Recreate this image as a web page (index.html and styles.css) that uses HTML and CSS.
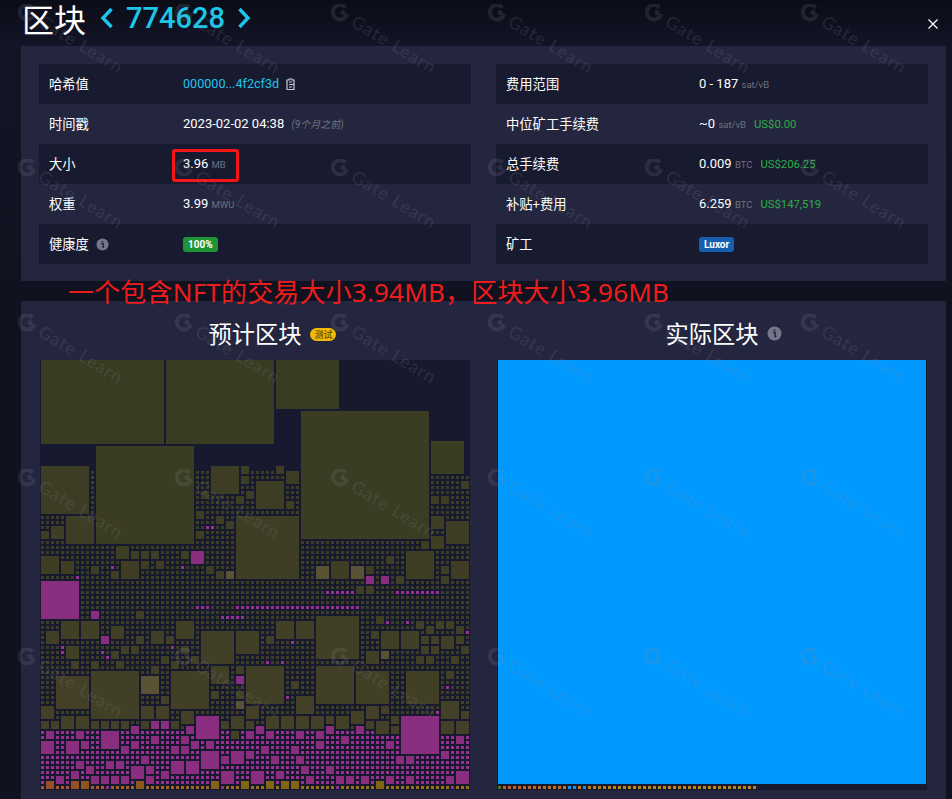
FILE: index.html
```html
<!DOCTYPE html>
<html lang="zh">
<head>
<meta charset="utf-8">
<title>区块 774628</title>
<link rel="stylesheet" href="styles.css">
</head>
<body>
<main class="page">
  <header class="head">
    <h1 class="head-title">区块</h1>
    <svg class="chev chev-left" viewBox="0 0 14 22"><path d="M11.5 2 3 11l8.5 9"/></svg>
    <span class="head-num">774628</span>
    <svg class="chev chev-right" viewBox="0 0 14 22"><path d="M2.5 2 11 11l-8.500 9"/></svg>
    <svg class="close" viewBox="0 0 10 10"><path d="M.5.5l9 9M9.500.5l-9 9"/></svg>
  </header>

  <section class="panel info">
    <div class="col col-l">
      <div class="row"><span class="lab">哈希值</span><span class="val"><span class="link">000000...4f2cf3d</span>
        <svg class="copy" viewBox="0 0 11 12"><path d="M2 2h2V1h3v1h2v9.500H2z" fill="none" stroke="#c9cad2" stroke-width="1.200"/><path d="M4 4h3M4 6.500h5M4 9h3" stroke="#c9cad2" stroke-width="1.200"/></svg></span></div>
      <div class="row"><span class="lab">时间戳</span><span class="val">2023-02-02 04:38 <i class="ago">(9个月之前)</i></span></div>
      <div class="row"><span class="lab">大小</span><span class="val">3.96 <small class="unit">MB</small></span></div>
      <div class="row"><span class="lab">权重</span><span class="val">3.99 <small class="unit">MWU</small></span></div>
      <div class="row"><span class="lab">健康度<svg class="info-ic info-ic-s" viewBox="0 0 14 14"><circle cx="7" cy="7" r="6.500" fill="#74768a"/><path d="M5.500 6h2.200v4h1M7 3.300v1.400" fill="none" stroke="#24263f" stroke-width="1.500"/></svg></span><span class="val"><b class="tag tag-green">100%</b></span></div>
    </div>
    <div class="col col-r">
      <div class="row"><span class="lab">费用范围</span><span class="val">0 - 187 <small class="unit">sat/vB</small></span></div>
      <div class="row"><span class="lab">中位矿工手续费</span><span class="val">~0 <small class="unit">sat/vB</small><span class="usd">US$0.00</span></span></div>
      <div class="row"><span class="lab">总手续费</span><span class="val">0.009 <small class="unit">BTC</small><span class="usd">US$206.25</span></span></div>
      <div class="row"><span class="lab">补贴+费用</span><span class="val">6.259 <small class="unit">BTC</small><span class="usd">US$147,519</span></span></div>
      <div class="row"><span class="lab">矿工</span><span class="val"><b class="tag tag-blue">Luxor</b></span></div>
    </div>
  </section>

  <section class="panel charts">
    <div class="chart-col">
      <h2 class="chart-title">预计区块<span class="beta">测试</span></h2>
      <svg id="projected" class="chart" viewBox="0 0 430 430"></svg>
    </div>
    <div class="chart-col">
      <h2 class="chart-title">实际区块<svg class="info-ic info-ic-l" viewBox="0 0 14 14"><circle cx="7" cy="7" r="6.500" fill="#74768a"/><path d="M5.500 6h2.200v4h1M7 3.300v1.400" fill="none" stroke="#24263f" stroke-width="1.500"/></svg></h2>
      <svg id="actual" class="chart" viewBox="0 0 430 430"></svg>
    </div>
  </section>

  <div class="red-box"></div>
  <p class="red-note">一个包含NFT的交易大小3.94MB，区块大小3.96MB</p>
  <div id="marks" class="marks"></div>
</main>
<script src="chart.js"></script>
</body>
</html>
```
FILE: styles.css
```css
* { box-sizing: border-box; }
html, body { margin: 0; height: 100%; }
body {
  background: #0e101b;
  color: #fff;
  font-family: Roboto, "Noto Sans CJK SC", sans-serif;
  overflow: hidden;
}
.page {
  position: relative;
  width: 952px;
  height: 799px;
  padding: 0 6px 0 21px;
  overflow: hidden;
  background: linear-gradient(180deg, #0a0c17 0, #131527 46px, #10121f 281px);
}
.head {
  position: relative;
  display: flex;
  align-items: center;
  height: 46px;
  padding: 0 0 10px 1px;
}
.head-title {
  margin: 0 14px 0 0;
  font: 400 32px/36px "Noto Sans CJK SC", sans-serif;
}
.head-num {
  margin: 0 12px;
  color: #1cc6ea;
  font: 500 29px/36px Roboto, sans-serif;
}
.chev { width: 14px; height: 22px; }
.chev path { fill: none; stroke: #1cc6ea; stroke-width: 3.4; }
.close { position: absolute; right: 8px; top: 19px; width: 10px; height: 10px; }
.close path { stroke: #fff; stroke-width: 1.200; fill: none; }

.panel { background: #24263f; }
.info {
  display: grid;
  grid-template-columns: 432px 432px;
  column-gap: 25px;
  height: 235px;
  padding: 18px;
}
.row {
  display: grid;
  align-items: center;
  height: 40px;
  padding-left: 10px;
}
.row:nth-child(odd) { background: #181a2f; }
.col-l .row { grid-template-columns: 134px 1fr; }
.col-r .row { grid-template-columns: 193px 1fr; }
.lab {
  display: flex;
  align-items: center;
  font: 400 13.300px/20px "Noto Sans CJK SC", sans-serif;
}
.val { display: flex; align-items: baseline; font-size: 13px; line-height: 20px; white-space: pre; }
.link { color: #1cc6ea; font-size: 12.600px; }
.copy { width: 11px; height: 12px; margin-left: 6px; align-self: center; }
.ago { margin-left: 4px; color: #6f7180; font: italic 400 10px/20px Roboto, "Noto Sans CJK SC", sans-serif; }
.unit { color: #6f7180; font-size: 9.500px; }
.usd { margin-left: 8px; color: #2cae45; font-size: 11.300px; }
.info-ic { display: block; }
.info-ic-s { width: 13px; height: 13px; margin-left: 7px; }
.info-ic-l { position: absolute; top: 25px; left: 102px; width: 15px; height: 15px; }
.tag {
  display: block;
  height: 15px;
  padding: 0 5px;
  border-radius: 3px;
  font: 700 10px/16px Roboto, sans-serif;
}
.tag-green { background: #1f9436; }
.tag-blue { background: #155fae; }

.charts {
  display: grid;
  grid-template-columns: 432px 432px;
  column-gap: 25px;
  height: 498px;
  margin-top: 20px;
  padding: 0 18px;
}
.chart-col { display: flex; flex-direction: column; align-items: center; }
.chart-title {
  position: relative;
  height: 59px;
  margin: 0;
  padding-top: 18px;
  font: 400 23.300px/28px "Noto Sans CJK SC", sans-serif;
}
.beta {
  position: absolute;
  top: 27px;
  left: 102px;
  width: 26px;
  height: 13px;
  border-radius: 7px;
  background: #f5b800;
  color: #3a3415;
  font-size: 9px;
  line-height: 13px;
  text-align: center;
}
.chart { display: block; width: 430px; height: 430px; background: #171a2e; }

.red-box {
  position: absolute;
  left: 172px;
  top: 149px;
  width: 67px;
  height: 33px;
  border: 3px solid #f51616;
  border-radius: 3px;
}
.red-note {
  position: absolute;
  left: 68px;
  top: 276px;
  margin: 0;
  color: #ee1c1c;
  font: 400 26px/32px "Noto Sans", "Noto Sans CJK SC", sans-serif;
  letter-spacing: .18px;
  white-space: nowrap;
}
.marks {
  position: absolute;
  inset: 0;
  display: grid;
  grid-template-columns: repeat(6, 156.670px);
  grid-template-rows: 155px 155px 155px 179px 155px;
  padding: 4px 0 0 18px;
  overflow: hidden;
  pointer-events: none;
}
.mark { position: relative; }
.mark svg { display: block; width: 18px; height: 18px; opacity: .17; }
.mark span {
  position: absolute;
  left: 22px;
  top: 6px;
  color: rgb(140, 140, 150);
  font: 400 17.500px/20px Lato, sans-serif;
  letter-spacing: 1.200px;
  opacity: .17;
  white-space: nowrap;
  transform: rotate(31deg);
  transform-origin: 0 50%;
}
```
FILE: chart.js
```js
var NS = 'http://www.w3.org/2000/svg';
function rect(svg, x, y, w, h, fill) {
  var r = document.createElementNS(NS, 'rect');
  r.setAttribute('x', x); r.setAttribute('y', y);
  r.setAttribute('width', w); r.setAttribute('height', h);
  r.setAttribute('fill', fill);
  svg.appendChild(r);
}
function mix(a, b, t) {
  return 'rgb(' + a.map(function (v, i) { return Math.round(v + (b[i] - v) * t); }).join(',') + ')';
}
function olive(v) { return mix([56, 60, 34], [68, 64, 40], Math.min(1, v / 72)); }

/* blocks of the treemap in grid units: x, y, w, h */
var OLIVE = [
 [0,0,25,17],[25,0,22,17],[47,0,13,10],[52,10,26,26],[78,16,7,7],[11,17,20,20],[0,21,10,10],[5,31,6,6],[2,33,3,3],[0,34,2,2],
 [34,21,6,6],[40,21,2,2],[40,23,2,2],[47,21,2,2],[49,22,3,3],[43,24,6,6],[41,26,2,2],[39,27,2,2],[49,28,2,2],[32,26,2,2],
 [31,30,2,2],[35,31,2,2],[37,32,2,2],[31,34,2,2],[39,31,13,13],[84,24,2,2],[78,27,2,2],[80,27,2,2],[78,31,3,3],[81,32,5,5],
 [78,35,3,3],[76,36,2,2],[15,37,3,3],[18,38,2,2],[20,38,2,2],[22,38,2,2],[28,38,2,2],[0,39,4,4],[73,38,6,6],[69,39,2,2],
 [4,40,3,3],[10,41,2,2],[14,42,2,2],[16,40,4,4],[20,40,2,2],[23,40,2,2],[33,41,2,2],[35,42,2,2],[58,40,4,4],[65,41,2,2],
 [71,43,2,2],[80,41,2,2],[80,43,2,2],[82,40,4,4],[19,50,2,2],[63,45,2,2],[65,45,2,2],[67,51,2,2],[75,52,2,2],[77,53,2,2],
 [79,52,2,2],[81,52,2,2],[83,53,2,2],[4,52,4,4],[8,52,4,4],[1,54,3,3],[14,53,3,3],[27,52,4,4],[19,55,2,2],[22,54,3,3],
 [25,55,2,2],[32,54,7,7],[39,54,5,5],[45,55,2,2],[47,52,4,4],[51,52,4,4],[55,51,9,9],[66,54,2,2],[68,54,4,4],[72,54,4,4],
 [76,55,2,2],[78,55,2,2],[80,55,3,3],[83,55,2,2],[5,57,3,3],[16,57,2,2],[18,57,2,2],[14,58,2,2],[76,57,2,2],[78,57,2,2],
 [84,57,2,2],[65,58,3,3],[28,57,2,2],[30,59,2,2],[24,59,2,2],[26,60,2,2],[6,60,2,2],[10,60,2,2],[15,60,2,2],[75,59,2,2],
 [77,59,2,2],[82,59,2,2],[22,61,2,2],[34,61,4,4],[39,61,2,2],[41,61,8,8],[55,61,8,8],[63,62,7,7],[73,62,7,7],[81,62,2,2],
 [3,63,7,7],[10,62,10,10],[26,62,8,8],[50,64,2,2],[34,66,2,2],[39,66,2,2],[24,67,2,2],[51,67,4,4],[41,69,3,3],[0,69,3,3],
 [20,69,3,3],[23,69,3,3],[65,69,3,3],[68,69,2,2],[80,68,4,4],[84,70,2,2],[62,70,3,3],[28,70,3,3],[38,71,3,3],[45,71,3,3],
 [48,71,3,3],[51,71,3,3],[54,71,3,3],[59,71,3,3],[57,71,2,2],[4,71,3,3],[7,71,3,3],[0,72,2,2],[2,72,2,2],[10,72,2,2],
 [12,72,2,2],[14,72,2,2],[16,72,2,2],[20,72,2,2],[26,72,2,2],[36,72,2,2],[41,72,2,2],[65,72,2,2],[67,72,3,3],[70,71,2,2],
 [70,73,2,2],[80,72,3,3],[83,72,3,3],[38,74,2,2]
];
var TAN = [[37,42,2,2],[55,41,3,3],[62,41,3,3],[68,58,2,2],[20,63,4,4],[39,68,2,2]];
var PURPLE = [
 [30,38,3,3],[65,43,2,2],[68,43,2,2],[0,44,8,8],[10,50,2,2],[12,55,2,2],[39,63,2,2],[22,72,2,2],[24,72,2,2],[31,71,5,5],
 [72,71,8,8],[18,73,2,2],[29,73,2,2],[43,73,2,2],[57,73,2,2],[63,73,2,2],[1,74,2,2],[7,74,2,2],[12,74,4,4],[22,75,2,2],
 [28,75,2,2],[41,74,2,2],[45,74,2,2],[51,74,2,2],[55,74,2,2],[60,75,2,2],[83,75,2,2],[0,76,3,3],[5,76,3,3],[8,76,2,2],
 [18,76,2,2],[30,76,2,2],[33,76,2,2],[55,76,2,2],[69,76,2,2],[16,77,2,2],[26,77,2,2],[28,77,2,2],[44,77,2,2],[50,77,2,2],
 [41,78,2,2],[80,78,2,2],[32,78,4,4],[38,78,3,3],[36,79,2,2],[46,79,2,2],[51,79,2,2],[71,79,2,2],[73,79,2,2],[20,79,2,2],
 [7,80,2,2],[13,80,2,2],[15,80,2,2],[26,80,3,3],[29,80,3,3],[9,81,2,2],[18,81,3,3],[21,81,2,2],[52,81,2,2],[57,81,2,2],
 [6,82,2,2],[24,82,2,2],[47,82,2,2],[36,82,3,3],[42,82,3,3],[83,82,3,3],[3,83,2,2],[10,83,2,2],[12,83,2,2],[14,83,2,2],
 [16,83,2,2],[21,83,2,2],[53,83,2,2],[59,83,2,2],[61,83,2,2],[64,83,2,2],[69,83,2,2],[73,83,2,2],[81,83,2,2]
];
var AMBER = [[1,84,2,2],[6,84,2,2],[8,84,2,2],[19,84,2,2],[34,84,2,2],[40,84,2,2],[45,84,2,2],[48,84,2,2],[50,84,2,2],[67,84,2,2]];
/* single purple cells scattered through the olive part */
var SINGLES = [[33,33],[34,33],[31,49],[32,49],[33,49],[69,52],[73,52],[85,54],[49,67],[81,65],[79,70],[45,60],[50,56],
 [24,56],[33,57],[26,57],[4,57],[4,58],[12,58],[14,59],[13,59],[38,59],[48,60],[57,46],[58,46],[59,46],[60,46],[61,46],[62,46],
 [36,51],[37,51],[38,51],[39,51],[40,51],[30,55],[37,55],[7,43],[28,41],[17,41],[14,41]];
for (var s = 39; s <= 63; s++) SINGLES.push([s, 49]);
for (s = 71; s <= 79; s++) SINGLES.push([s, 46]);

var projected = document.getElementById('projected');
var taken = {};
function mark(list) {
  list.forEach(function (b) {
    for (var i = 0; i < b[2]; i++) for (var j = 0; j < b[3]; j++) taken[(b[0] + i) + ',' + (b[1] + j)] = 1;
  });
}
[OLIVE, TAN, PURPLE, AMBER].forEach(mark);
var singles = {};
SINGLES.forEach(function (c) { singles[c[0] + ',' + c[1]] = 1; });

function block(b, fill) {
  var top = b[1] === 0 ? 0 : 1 + 5 * b[1];
  var h = 5 * b[3] - 2 + (b[1] === 0 ? 1 : 0);
  rect(projected, 1 + 5 * b[0], top, 5 * b[2] - 2, h, fill);
}
OLIVE.forEach(function (b) { block(b, olive(b[1])); });
TAN.forEach(function (b) { block(b, '#5a5234'); });
PURPLE.forEach(function (b) { block(b, '#892e7e'); });
AMBER.forEach(function (b) {
  block(b, mix([150, 78, 38], [130, 102, 22], Math.min(1, b[0] / 40)));
});

for (var v = 22; v <= 85; v++) {
  for (var u = 0; u <= 85; u++) {
    if (taken[u + ',' + v]) continue;
    if (v === 22 && u >= 78) continue;
    var fill;
    if (v === 85) {
      fill = (u % 23 === 13) ? '#96308f' : mix([176, 84, 40], [150, 116, 20], Math.min(1, u / 45));
    } else if (v >= 74) {
      fill = '#9a3094';
    } else if (singles[u + ',' + v]) {
      fill = '#9a3094';
    } else {
      fill = olive(v * 0.4);
    }
    rect(projected, 1 + 5 * u, 1 + 5 * v, 3, 3, fill);
  }
}

var actual = document.getElementById('actual');
rect(actual, 1, 0, 428, 424, '#0099ff');
for (var i = 0; i < 52; i++) {
  var c = mix([196, 90, 44], [190, 132, 18], Math.min(1, i / 22));
  if (i === 0) c = '#4f7d10';
  if (i === 14 || i === 15 || i === 17) c = '#0a96f0';
  rect(actual, 1 + 5 * i, 426, 3, 3, c);
}

/* repeating watermark over the whole page */
var marks = document.getElementById('marks');
for (var n = 0; n < 30; n++) {
  var m = document.createElement('div');
  m.className = 'mark';
  m.innerHTML = '<svg viewBox="0 0 18 18"><path d="M14.500 3.600A7.200 7.200 0 1 0 16 10" fill="none" stroke="rgb(140,140,150)" stroke-width="4"/><circle cx="12" cy="8.500" r="2.600" fill="rgb(140,140,150)"/></svg><span>Gate Learn</span>';
  marks.appendChild(m);
}
```
